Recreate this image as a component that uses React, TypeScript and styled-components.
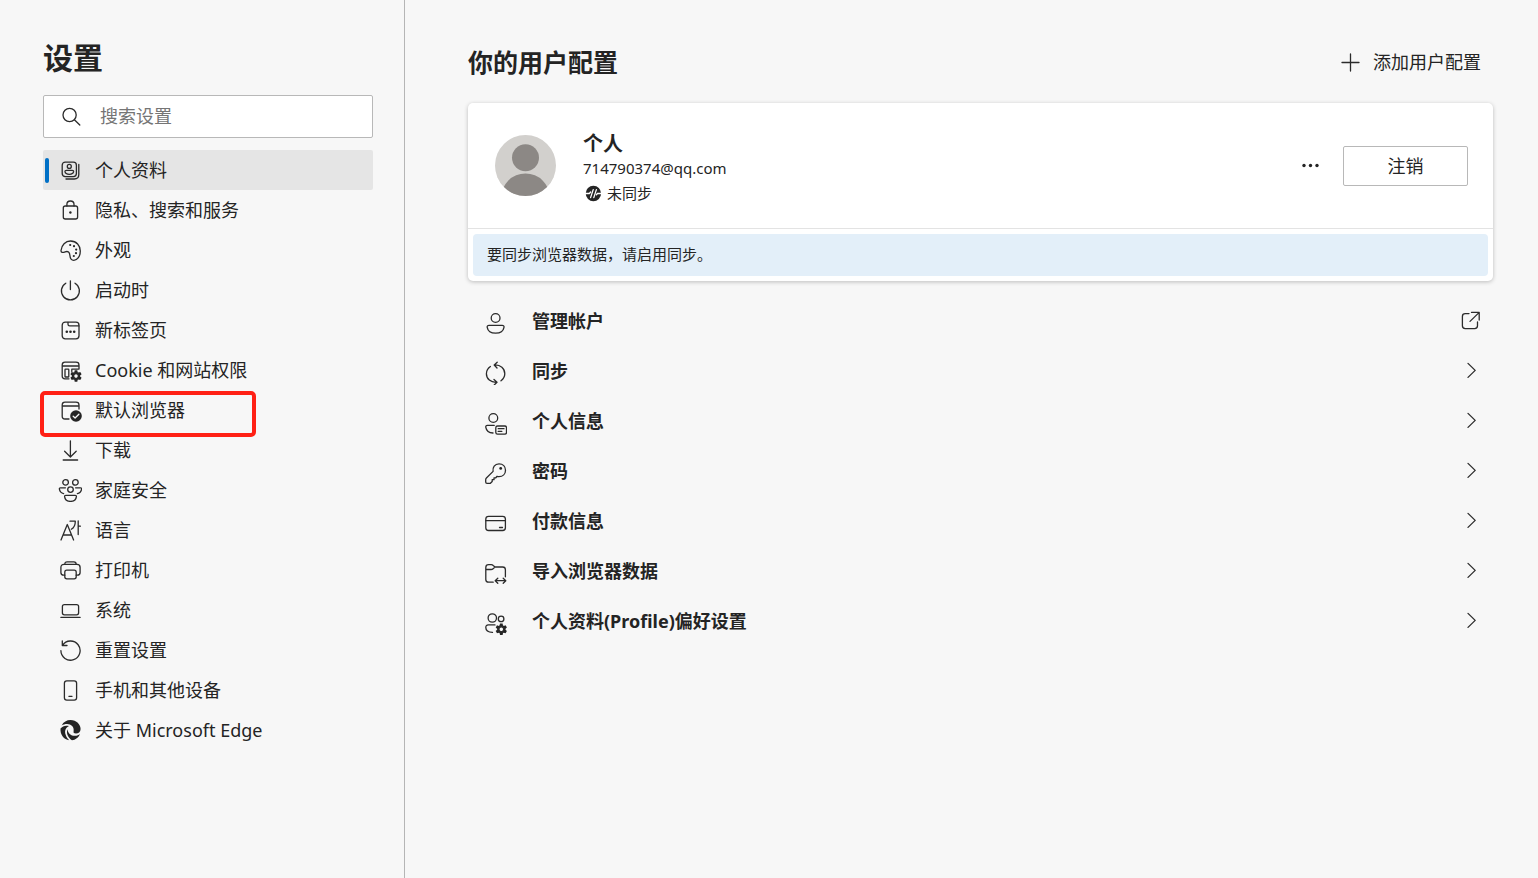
import React from "react";
import styled, { createGlobalStyle } from "styled-components";

const GlobalStyle = createGlobalStyle`
  *, *::before, *::after { box-sizing: border-box; }
  body {
    margin: 0;
    background: #f7f7f7;
    color: #242424;
    font-family: "Noto Sans", "Noto Sans CJK SC", sans-serif;
    font-size: 18px;
    line-height: 24px;
  }
  a { color: inherit; text-decoration: none; }
  button, input { font: inherit; color: inherit; }
  h1, h2, h3, p, ul { margin: 0; padding: 0; }
  ul { list-style: none; }
`;

const Page = styled.div`
  display: flex;
  min-height: 100vh;
`;

const Sidebar = styled.aside`
  flex: 0 0 405px;
  padding: 38px 31px 38px 43px;
  border-right: 1px solid #b5b5b5;
`;

const SidebarTitle = styled.h1`
  font-size: 30px;
  line-height: 40px;
  font-weight: 700;
`;

const SearchBox = styled.label`
  display: flex;
  align-items: center;
  gap: 17px;
  height: 43px;
  margin: 17px 0 12px;
  padding: 0 15px;
  background: #fff;
  border: 1px solid #b8b8b8;
  border-radius: 2px;
`;

const SearchInput = styled.input`
  flex: 1;
  min-width: 0;
  padding: 0 0 2px;
  border: 0;
  outline: 0;
  background: transparent;
  &::placeholder { color: #757575; opacity: 1; }
`;

const NavItem = styled.li`
  position: relative;
`;

const NavLink = styled.a<{ $active?: boolean }>`
  display: flex;
  align-items: center;
  gap: 13px;
  height: 40px;
  padding-left: 15px;
  border-radius: 2px;
  white-space: nowrap;
  background: ${(p) => (p.$active ? "#e5e5e5" : "transparent")};
`;

const ActiveBar = styled.span`
  position: absolute;
  left: 2px;
  top: 8px;
  width: 4px;
  height: 25px;
  border-radius: 2px;
  background: #0070c6;
`;

const Highlight = styled.span`
  position: absolute;
  left: -3px;
  top: 1px;
  width: 216px;
  height: 46px;
  border: 4px solid #ff2015;
  border-radius: 5px;
  pointer-events: none;
`;

const Icon = styled.svg<{ $size?: number }>`
  flex: none;
  display: block;
  width: ${(p) => p.$size ?? 24}px;
  height: ${(p) => p.$size ?? 24}px;
  fill: none;
  stroke: #2b2b2b;
  stroke-width: 1.3;
  stroke-linecap: round;
  stroke-linejoin: round;
  .solid { fill: #242424; stroke: none; }
`;

const Main = styled.main`
  flex: 1;
  min-width: 0;
  padding: 42px 45px 42px 63px;
`;

const MainHeader = styled.header`
  display: flex;
  align-items: center;
  justify-content: space-between;
  height: 40px;
  padding-right: 12px;
  margin-bottom: 21px;
`;

const MainTitle = styled.h2`
  font-size: 25px;
  line-height: 40px;
  font-weight: 700;
`;

const AddButton = styled.button`
  display: flex;
  align-items: center;
  gap: 12px;
  padding: 0;
  border: 0;
  background: none;
`;

const Card = styled.section`
  background: #fff;
  border-radius: 5px;
  box-shadow: 0 1px 4px rgba(0, 0, 0, 0.24);
`;

const Profile = styled.div`
  display: flex;
  align-items: center;
  height: 126px;
  padding: 0 25px 0 27px;
  border-bottom: 1px solid #e3e3e3;
`;

const Avatar = styled.svg`
  flex: none;
  width: 61px;
  height: 61px;
  margin-right: 27px;
`;

const ProfileText = styled.div`
  flex: 1;
  min-width: 0;
  padding-top: 6px;
`;

const ProfileName = styled.h3`
  font-size: 20px;
  line-height: 24px;
  font-weight: 700;
`;

const ProfileDetail = styled.p`
  display: flex;
  align-items: center;
  gap: 5px;
  font-size: 15px;
  line-height: 25px;
`;

const MoreButton = styled.button`
  padding: 0;
  margin-right: 20px;
  border: 0;
  background: none;
`;

const SignOutButton = styled.button`
  width: 125px;
  height: 40px;
  padding: 0;
  background: #fff;
  border: 1px solid #b8b8b8;
  border-radius: 2px;
`;

const BannerWrap = styled.div`
  padding: 5px;
`;

const Banner = styled.p`
  padding: 8px 14px 10px;
  border-radius: 4px;
  background: #e3eff9;
  font-size: 15px;
  line-height: 24px;
`;

const OptionList = styled.ul`
  margin-top: 15px;
`;

const Option = styled.a`
  display: flex;
  align-items: center;
  height: 50px;
  padding: 0 10px 0 15px;
  font-weight: 700;
`;

const OptionIcon = styled.span`
  padding-top: 4px;
  margin-right: 25px;
`;

const OptionLabel = styled.span`
  flex: 1;
`;

const Gear = ({ x, y }: { x: number; y: number }) => (
  <g transform={`translate(${x} ${y})`}>
    <circle r="2.9" strokeWidth="2.4" />
    {[0, 60, 120, 180, 240, 300].map((a) => (
      <path key={a} className="solid" d="M-1.8 -3.2L-1.3 -5.7H1.3L1.8 -3.2Z" transform={`rotate(${a})`} />
    ))}
  </g>
);

type Entry = { label: string; icon: React.ReactNode; marked?: boolean; external?: boolean };

const navEntries: Entry[] = [
  {
    label: "个人资料",
    icon: (
      <>
        <rect x="4.2" y="4.2" width="14.2" height="14.4" rx="3" />
        <path d="M20.8 6.5V16.5C20.8 19.2 19 21 16.3 21H8" />
        <circle cx="11.3" cy="8.4" r="2" />
        <path d="M8.4 12.4H14.3C15.2 12.4 15.7 12.9 15.6 13.7C15.3 15.5 13.7 16.3 11.3 16.3C9 16.3 7.3 15.5 7 13.7C6.9 12.9 7.5 12.4 8.4 12.4Z" />
      </>
    ),
  },
  {
    label: "隐私、搜索和服务",
    icon: (
      <>
        <rect x="5.3" y="8" width="14.3" height="13" rx="2" />
        <path d="M8.9 8V6.3C8.9 4.3 10.3 3 12.4 3S16 4.3 16 6.3V8" />
        <circle className="solid" cx="12.4" cy="14.5" r="1.2" />
      </>
    ),
  },
  {
    label: "外观",
    icon: (
      <>
        <path d="M3 12.5C3.5 7 7.5 3 12.5 3C18.5 3 22.3 7.5 22.3 13C22.3 18.5 19.3 22.3 15.8 22.3C12.7 22.3 12.1 20 11.9 17.5C11.7 14.2 10 12.8 7.2 13.8C4.6 14.8 2.8 14.6 3 12.5Z" />
        {[[12.2, 7], [16, 8.2], [18.2, 11.6], [18, 15.2], [15.8, 18]].map(([x, y]) => (
          <circle key={y} className="solid" cx={x} cy={y} r="1.1" />
        ))}
      </>
    ),
  },
  {
    label: "启动时",
    icon: <path d="M12.4 2.8V11.5M7.8 5.2A9 9 0 1 0 17 5.2" />,
  },
  {
    label: "新标签页",
    icon: (
      <>
        <rect x="4.2" y="4.2" width="16.8" height="16.6" rx="3" />
        <path d="M10 4.4V6.2C10 7.3 10.6 7.9 11.7 7.9H20.8" />
        {[8.8, 12.5, 16.2].map((x) => (
          <circle key={x} className="solid" cx={x} cy="13.7" r="1.3" />
        ))}
      </>
    ),
  },
  {
    label: "Cookie 和网站权限",
    icon: (
      <>
        <path d="M11 20.8H7C5.2 20.8 4.2 19.7 4.2 18V7C4.2 5.2 5.3 4.2 7 4.2H18C19.8 4.2 21 5.2 21 7V11M4.2 8H21M13.8 11.2H20.5M13.8 11.2V13.5" />
        <rect x="7" y="11.2" width="3.8" height="7.8" rx="0.6" />
        <Gear x={18} y={18} />
      </>
    ),
  },
  {
    label: "默认浏览器",
    marked: true,
    icon: (
      <>
        <path d="M11 21H7C5.2 21 4.2 19.9 4.2 18.2V7C4.2 5.2 5.3 4.2 7 4.2H18C19.8 4.2 21 5.2 21 7V11M4.2 8H21" />
        <circle className="solid" cx="18" cy="18" r="5.8" />
        <path d="M15.2 18.2L17.1 20L20.9 16.2" stroke="#f7f7f7" />
      </>
    ),
  },
  {
    label: "下载",
    icon: <path d="M12.4 2.8V18.7M6.6 13.3L12.4 19L18.2 13.3M5.2 22H19.6" />,
  },
  {
    label: "家庭安全",
    icon: (
      <>
        <circle cx="7.6" cy="4.4" r="2.8" />
        <circle cx="17.4" cy="4.4" r="2.8" />
        <circle cx="12.5" cy="11.6" r="2.8" />
        <path d="M7.8 17.3H17.2C18 17.3 18.5 17.8 18.4 18.6C18 22 15.8 23.4 12.5 23.4S7 22 6.6 18.6C6.5 17.8 7 17.3 7.8 17.3ZM7.4 9.8H2.5C1.7 9.8 1.2 10.3 1.4 11.2C1.9 13.8 3.3 15.2 5.6 15.6M17.6 9.8H22.5C23.3 9.8 23.8 10.3 23.6 11.2C23.1 13.8 21.7 15.2 19.4 15.6" />
      </>
    ),
  },
  {
    label: "语言",
    icon: <path d="M3 22L9.3 6.5L15.6 22M5.3 17H13.4M12 3.2H17.3C17.3 7 16 9.7 13.3 11.2M20.2 2.8V16.6M20.2 8.2H22.4" />,
  },
  {
    label: "打印机",
    icon: (
      <>
        <path d="M6.8 17.2H5.7C3.9 17.2 2.9 16.2 2.9 14.4V9.4C2.9 7.4 4 6.3 6 6.3H19C21 6.3 22.1 7.4 22.1 9.4V14.4C22.1 16.2 21.1 17.2 19.3 17.2H18.2M6.8 6.3C6.8 4.6 7.6 3.8 9.2 3.8H15.8C17.4 3.8 18.2 4.6 18.2 6.3" />
        <rect x="6.8" y="12.2" width="11.4" height="8.6" rx="2" />
      </>
    ),
  },
  {
    label: "系统",
    icon: (
      <>
        <rect x="4.4" y="6.6" width="16.2" height="10.2" rx="2" />
        <path d="M2.9 19.4H22.1" />
      </>
    ),
  },
  {
    label: "重置设置",
    icon: <path d="M4.3 2.9V7.5H9M4.5 7.3A9.6 9.6 0 1 1 2.9 12.6" />,
  },
  {
    label: "手机和其他设备",
    icon: (
      <>
        <rect x="6.4" y="2.8" width="12.2" height="19.4" rx="2.4" />
        <path d="M10.9 18.3H14" />
      </>
    ),
  },
  {
    label: "关于 Microsoft Edge",
    icon: (
      <>
        <path className="solid" d="M3.6 7.4C5.4 4 8.8 2 12.5 2C18.5 2 22.6 6.4 22.6 11C22.6 14 20.3 15.5 18 15.5C16 15.5 15.2 14.5 15.6 13.2C16.5 9 13 6 9.2 6C7 6 5 6.6 3.6 7.4Z" />
        <path className="solid" d="M2.5 10.6C4.5 7.8 8 7.1 11 8.1C7.6 9.6 6.4 13 7.6 16.6C8.3 19 9.6 20.8 11.2 22.2C6 21.7 2 17 2.5 10.6Z" />
        <path className="solid" d="M9.8 11.2C9.6 15.3 13 17.9 17 17.8C19 17.7 20.8 17.1 22 16C20.6 19.6 17.4 22 14 22.2C10.8 20.4 7.3 15 9.8 11.2Z" />
      </>
    ),
  },
];

const optionEntries: Entry[] = [
  {
    label: "管理帐户",
    external: true,
    icon: (
      <>
        <circle cx="12.6" cy="7" r="4.4" />
        <path d="M6 14.4H19.2C20.5 14.4 21.2 15.1 21 16.3C20.3 20.2 17.3 22.1 12.6 22.1S4.9 20.2 4.2 16.3C4 15.1 4.7 14.4 6 14.4Z" />
      </>
    ),
  },
  {
    label: "同步",
    icon: <path d="M14.2 1.2L11.2 4L14 7M11.4 4C17.5 3.6 21.8 7.7 21.8 12.8C21.8 15.7 20.4 18 18 19.8M11 18.5L14 21.3L11.2 24M13.8 21.3C7.7 21.7 3.4 17.7 3.4 12.7C3.4 9.8 4.8 7.3 7.4 5.5" />,
  },
  {
    label: "个人信息",
    icon: (
      <>
        <circle cx="10.3" cy="7" r="4.4" />
        <path d="M11.2 14.4H4.4C3.2 14.4 2.6 15.1 2.8 16.3C3.4 19.7 5.7 21.7 10 22" />
        <rect x="12.8" y="15" width="10.7" height="8.2" rx="1.8" />
        <path d="M15.2 17.7H21M15.2 20.4H18.8" />
      </>
    ),
  },
  {
    label: "密码",
    icon: (
      <>
        <path d="M16 2.8C20 2.8 22.5 5.5 22.5 9.2C22.5 13 19.8 15.6 16 15.6C15.4 15.6 14.7 15.5 14.1 15.3L12.8 16.8H11V18.7H9.2V20.5L7.4 22.3H4C3.2 22.3 2.7 21.8 2.7 21V18.7C2.7 18 2.9 17.5 3.4 17L10.1 10.4C9.3 6.3 11.8 2.8 16 2.8Z" />
        <circle className="solid" cx="17.7" cy="7.4" r="1.4" />
      </>
    ),
  },
  {
    label: "付款信息",
    icon: (
      <>
        <rect x="2.8" y="5.3" width="19.6" height="14.2" rx="2.8" />
        <path d="M2.8 9.7H22.4M16.5 16.5H19.5" />
      </>
    ),
  },
  {
    label: "导入浏览器数据",
    icon: (
      <path d="M10.2 21.2H5.6C3.8 21.2 2.8 20.2 2.8 18.4V6.4C2.8 4.7 3.8 3.7 5.6 3.7H8.2C9.1 3.7 9.6 3.9 10.2 4.5L12 6H19.6C21.4 6 22.4 7 22.4 8.8V15.8M2.8 8.5H8C8.9 8.5 9.5 8.3 10.1 7.7L12 6M12.3 19.7H22.7M14.8 17.2L12.2 19.7L14.8 22.2M20.2 17.2L22.8 19.7L20.2 22.2" />
    ),
  },
  {
    label: "个人资料(Profile)偏好设置",
    icon: (
      <>
        <circle cx="9.3" cy="7" r="4.2" />
        <circle cx="18.1" cy="7.9" r="2.8" />
        <path d="M12 13.9H5.3C3.6 13.9 2.8 14.9 2.8 16.5C2.8 19.4 4.8 21.2 9.5 21.4" />
        <Gear x={18.3} y={18.3} />
      </>
    ),
  },
];

export default function App() {
  return (
    <Page>
      <GlobalStyle />
      <Sidebar>
        <SidebarTitle>设置</SidebarTitle>
        <SearchBox>
          <Icon viewBox="0 0 24 24" aria-hidden="true">
            <circle cx="10.6" cy="10" r="6.6" />
            <path d="M15.4 14.7L20.8 20" />
          </Icon>
          <SearchInput type="text" placeholder="搜索设置" aria-label="搜索设置" />
        </SearchBox>
        <nav>
          <ul>
            {navEntries.map((entry, i) => (
              <NavItem key={entry.label}>
                <NavLink href="#" $active={i === 0}>
                  <Icon viewBox="0 0 24 24" aria-hidden="true">{entry.icon}</Icon>
                  {entry.label}
                </NavLink>
                {i === 0 && <ActiveBar />}
                {entry.marked && <Highlight />}
              </NavItem>
            ))}
          </ul>
        </nav>
      </Sidebar>
      <Main>
        <MainHeader>
          <MainTitle>你的用户配置</MainTitle>
          <AddButton type="button">
            <Icon viewBox="0 0 24 24" aria-hidden="true">
              <path d="M13.5 4V21M5 12.5H22" />
            </Icon>
            添加用户配置
          </AddButton>
        </MainHeader>
        <Card>
          <Profile>
            <Avatar viewBox="0 0 61 61" aria-hidden="true">
              <defs>
                <clipPath id="avatar-clip">
                  <circle cx="30.5" cy="30.5" r="30.5" />
                </clipPath>
              </defs>
              <g clipPath="url(#avatar-clip)">
                <rect width="61" height="61" fill="#d2d0cd" />
                <circle cx="30.5" cy="22.7" r="13.5" fill="#8c8885" />
                <circle cx="30.5" cy="63" r="24.5" fill="#8c8885" />
              </g>
            </Avatar>
            <ProfileText>
              <ProfileName>个人</ProfileName>
              <ProfileDetail>714790374@qq.com</ProfileDetail>
              <ProfileDetail>
                <Icon $size={19} viewBox="0 0 19 19" aria-hidden="true">
                  <circle className="solid" cx="10.4" cy="9.5" r="7.7" />
                  <path
                    d="M2.5 9.5H6.4L7.6 8M7.6 13.6L10.2 5.6M10.8 13.6L13.4 5.6M13.4 10.8L14.4 9.5H18.5"
                    stroke="#fff"
                  />
                </Icon>
                未同步
              </ProfileDetail>
            </ProfileText>
            <MoreButton type="button" aria-label="更多">
              <Icon viewBox="0 0 24 24" aria-hidden="true">
                {[5, 11.5, 18].map((x) => (
                  <circle key={x} className="solid" cx={x} cy="11.5" r="1.7" />
                ))}
              </Icon>
            </MoreButton>
            <SignOutButton type="button">注销</SignOutButton>
          </Profile>
          <BannerWrap>
            <Banner>要同步浏览器数据，请启用同步。</Banner>
          </BannerWrap>
        </Card>
        <OptionList>
          {optionEntries.map((entry) => (
            <li key={entry.label}>
              <Option href="#">
                <OptionIcon>
                  <Icon viewBox="0 0 24 24" aria-hidden="true">{entry.icon}</Icon>
                </OptionIcon>
                <OptionLabel>{entry.label}</OptionLabel>
                <Icon viewBox="0 0 24 24" aria-hidden="true">
                  {entry.external ? (
                    <path d="M10 4.6H6.2C4.4 4.6 3.4 5.6 3.4 7.4V16.8C3.4 18.6 4.4 19.6 6.2 19.6H15.7C17.5 19.6 18.5 18.6 18.5 16.8V13M12.5 3.4H20.2V11M20 3.6L11 12.4" />
                  ) : (
                    <path d="M9 4.4L16.2 11.4L9 18.4" />
                  )}
                </Icon>
              </Option>
            </li>
          ))}
        </OptionList>
      </Main>
    </Page>
  );
}
